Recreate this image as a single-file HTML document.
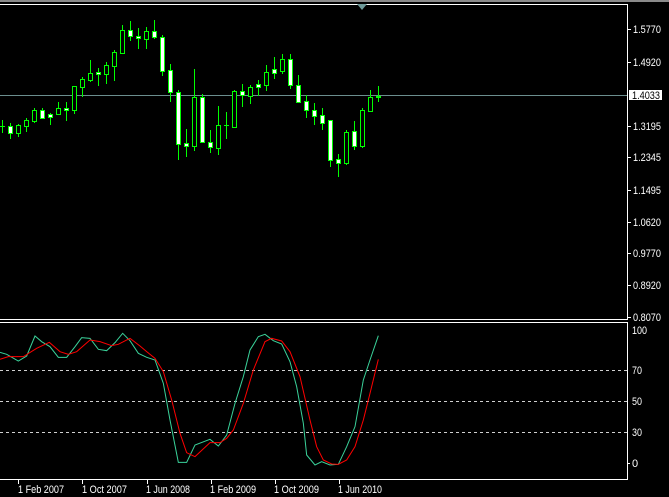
<!DOCTYPE html>
<html><head><meta charset="utf-8"><style>
html,body{margin:0;padding:0;background:#000;width:669px;height:497px;overflow:hidden}
svg{display:block}
text{font-family:"Liberation Sans",sans-serif;font-size:11px;fill:#fff}
.b{fill:#000;stroke:#00ff00;stroke-width:1}
.w{fill:#fff;stroke:#00ff00;stroke-width:1}
</style></head><body>
<svg width="669" height="497" viewBox="0 0 669 497" xmlns="http://www.w3.org/2000/svg">
<rect x="0" y="0" width="669" height="497" fill="#000"/>
<rect x="0" y="0" width="669" height="2" fill="#8a8a8a"/>
<path d="M0 4.5H627.5V319.5H0" fill="none" stroke="#fff" stroke-width="1"/>
<path d="M0 322.5H627.5V479.5H0" fill="none" stroke="#fff" stroke-width="1"/>
<polygon points="357,4 367,4 362,10" fill="#6f9a9a"/>
<line x1="0" y1="95.5" x2="627" y2="95.5" stroke="#6b8e8e" stroke-width="1"/>
<path stroke="#00ff00" stroke-width="1" fill="none" d="M2.5 120V133M10.5 123V139M18.5 124V137M26.5 118V132M34.5 108V123M42.5 108V119M50.5 113V125M58.5 102V115M66.5 102V121M74.5 86V114M82.5 77V97M90.5 60V82M98.5 68V86M106.5 62V84M114.5 50V81M122.5 25V54M130.5 21V41M138.5 28V49M146.5 27V49M154.5 20V39M162.5 35V76M170.5 64V102M178.5 90V160M186.5 129V157M194.5 69V151M202.5 94V143M210.5 130V153M218.5 106V155M226.5 112V139M234.5 90V127M242.5 84V107M250.5 85V104M258.5 80V96M266.5 65V91M274.5 57V79M282.5 54V74M290.5 54V89M298.5 75V103M306.5 95V118M314.5 103V125M322.5 108V130M330.5 120V167M338.5 154V177M346.5 130V165M354.5 121V150M362.5 108V148M370.5 90V111M378.5 86V102M0 126.5H5M224 125.5H229"/>
<rect class="w" x="8.5" y="126.5" width="4" height="7"/>
<rect class="b" x="16.5" y="125.5" width="4" height="8"/>
<rect class="b" x="24.5" y="120.5" width="4" height="6"/>
<rect class="b" x="32.5" y="110.5" width="4" height="11"/>
<rect class="w" x="40.5" y="110.5" width="4" height="8"/>
<rect class="w" x="48.5" y="114.5" width="4" height="3"/>
<rect class="b" x="56.5" y="108.5" width="4" height="6"/>
<rect class="w" x="64.5" y="108.5" width="4" height="2"/>
<rect class="b" x="72.5" y="86.5" width="4" height="24"/>
<rect class="b" x="80.5" y="79.5" width="4" height="8"/>
<rect class="b" x="88.5" y="73.5" width="4" height="7"/>
<rect class="w" x="96.5" y="72.5" width="4" height="2"/>
<rect class="b" x="104.5" y="65.5" width="4" height="9"/>
<rect class="b" x="112.5" y="52.5" width="4" height="14"/>
<rect class="b" x="120.5" y="30.5" width="4" height="23"/>
<rect class="w" x="128.5" y="30.5" width="4" height="6"/>
<rect class="w" x="136.5" y="36.5" width="4" height="2"/>
<rect class="b" x="144.5" y="31.5" width="4" height="8"/>
<rect class="w" x="152.5" y="31.5" width="4" height="6"/>
<rect class="w" x="160.5" y="37.5" width="4" height="34"/>
<rect class="w" x="168.5" y="70.5" width="4" height="22"/>
<rect class="w" x="176.5" y="92.5" width="4" height="52"/>
<rect class="w" x="184.5" y="143.5" width="4" height="3"/>
<rect class="b" x="192.5" y="97.5" width="4" height="49"/>
<rect class="w" x="200.5" y="97.5" width="4" height="45"/>
<rect class="w" x="208.5" y="142.5" width="4" height="5"/>
<rect class="b" x="216.5" y="125.5" width="4" height="23"/>
<rect class="b" x="232.5" y="91.5" width="4" height="36"/>
<rect class="w" x="240.5" y="91.5" width="4" height="4"/>
<rect class="b" x="248.5" y="87.5" width="4" height="9"/>
<rect class="w" x="256.5" y="84.5" width="4" height="3"/>
<rect class="b" x="264.5" y="72.5" width="4" height="13"/>
<rect class="w" x="272.5" y="69.5" width="4" height="4"/>
<rect class="b" x="280.5" y="59.5" width="4" height="12"/>
<rect class="w" x="288.5" y="59.5" width="4" height="26"/>
<rect class="w" x="296.5" y="85.5" width="4" height="17"/>
<rect class="w" x="304.5" y="101.5" width="4" height="9"/>
<rect class="w" x="312.5" y="110.5" width="4" height="6"/>
<rect class="w" x="320.5" y="115.5" width="4" height="8"/>
<rect class="w" x="328.5" y="120.5" width="4" height="40"/>
<rect class="w" x="336.5" y="159.5" width="4" height="4"/>
<rect class="b" x="344.5" y="132.5" width="4" height="31"/>
<rect class="w" x="352.5" y="131.5" width="4" height="15"/>
<rect class="b" x="360.5" y="110.5" width="4" height="36"/>
<rect class="b" x="368.5" y="97.5" width="4" height="14"/>
<rect class="w" x="376.5" y="96.5" width="4" height="1"/>
<path stroke="#fff" stroke-width="1" d="M628 29.5H631M628 62.5H631M628 126.5H631M628 157.5H631M628 190.5H631M628 222.5H631M628 253.5H631M628 285.5H631M628 317.5H631M628 463.5H630"/>
<text x="633" y="33" textLength="28" lengthAdjust="spacingAndGlyphs">1.5770</text>
<text x="633" y="66" textLength="28" lengthAdjust="spacingAndGlyphs">1.4920</text>
<rect x="629" y="90" width="33" height="10" fill="#fff"/>
<text x="632" y="99" textLength="28" lengthAdjust="spacingAndGlyphs" style="fill:#000">1.4033</text>
<text x="633" y="130" textLength="28" lengthAdjust="spacingAndGlyphs">1.3195</text>
<text x="633" y="161" textLength="28" lengthAdjust="spacingAndGlyphs">1.2345</text>
<text x="633" y="194" textLength="28" lengthAdjust="spacingAndGlyphs">1.1495</text>
<text x="633" y="226" textLength="28" lengthAdjust="spacingAndGlyphs">1.0620</text>
<text x="633" y="257" textLength="28" lengthAdjust="spacingAndGlyphs">0.9770</text>
<text x="633" y="289" textLength="28" lengthAdjust="spacingAndGlyphs">0.8920</text>
<text x="633" y="321" textLength="28" lengthAdjust="spacingAndGlyphs">0.8070</text>
<text x="632" y="334" textLength="15" lengthAdjust="spacingAndGlyphs">100</text>
<text x="632" y="374" textLength="10" lengthAdjust="spacingAndGlyphs">70</text>
<text x="632" y="405" textLength="10" lengthAdjust="spacingAndGlyphs">50</text>
<text x="632" y="436" textLength="10" lengthAdjust="spacingAndGlyphs">30</text>
<text x="632" y="467">0</text>
<path stroke="#d0d0d0" stroke-width="1" stroke-dasharray="3,3" d="M0 370.5H627M0 401.5H627M0 432.5H627"/>
<g transform="translate(0,320) scale(0.33333)">
<polyline fill="none" stroke="#3ad29a" stroke-width="3" points="0,97 20,103 55,123 80,108 105,48 125,65 150,80 175,112 200,112 225,80 245,53 270,55 295,88 320,92 345,68 368,40 390,62 415,100 440,112 465,120 490,190 510,300 535,427 560,427 585,375 630,358 655,378 680,345 705,250 730,170 750,90 775,50 795,43 820,62 845,72 870,125 890,200 910,310 920,405 945,435 965,425 990,435 1015,433 1040,380 1065,320 1090,180 1110,120 1135,47"/>
<polyline fill="none" stroke="#ff0000" stroke-width="3" points="0,118 25,110 70,110 110,85 148,67 180,95 205,103 230,95 270,60 300,65 335,77 355,73 390,55 420,78 440,95 465,115 490,155 515,240 540,340 560,398 585,410 630,368 660,368 680,355 700,330 730,250 760,150 795,65 815,55 845,63 870,95 900,170 930,300 950,380 970,420 995,432 1015,433 1040,420 1065,380 1090,300 1110,220 1135,118"/>
</g>
<path stroke="#fff" stroke-width="1" d="M18.5 480V484M82.5 480V484M147.5 480V484M211.5 480V484M275.5 480V484M339.5 480V484"/>
<text x="18" y="493" textLength="46" lengthAdjust="spacingAndGlyphs">1 Feb 2007</text>
<text x="82" y="493" textLength="45" lengthAdjust="spacingAndGlyphs">1 Oct 2007</text>
<text x="146" y="493" textLength="44" lengthAdjust="spacingAndGlyphs">1 Jun 2008</text>
<text x="210" y="493" textLength="46" lengthAdjust="spacingAndGlyphs">1 Feb 2009</text>
<text x="274" y="493" textLength="45" lengthAdjust="spacingAndGlyphs">1 Oct 2009</text>
<text x="338" y="493" textLength="44" lengthAdjust="spacingAndGlyphs">1 Jun 2010</text>
</svg>
</body></html>
